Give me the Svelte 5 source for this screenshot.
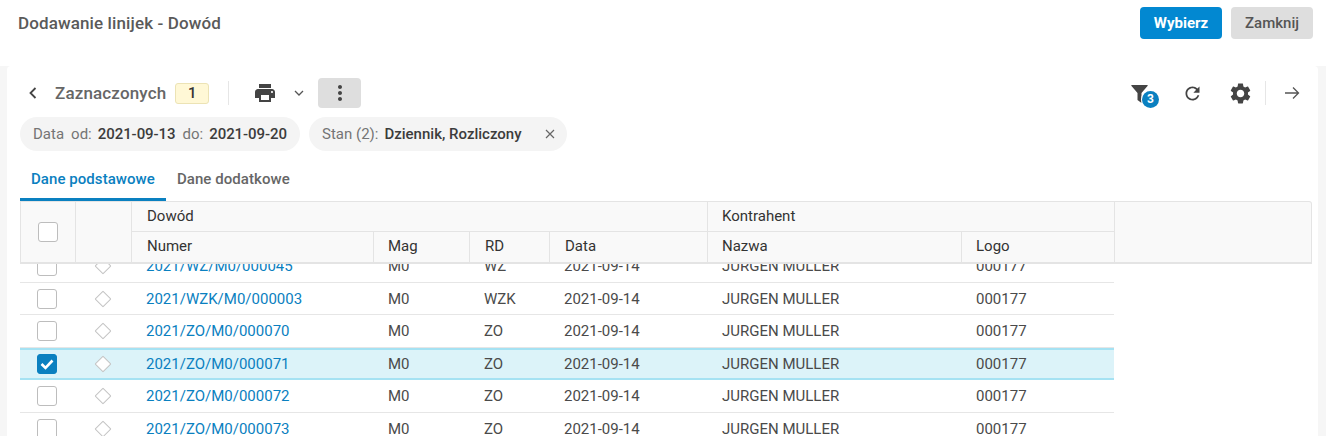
<script>
    const rows = [
        { numer: '2021/WZ/M0/000045', rd: 'WZ' },
        { numer: '2021/WZK/M0/000003', rd: 'WZK' },
        { numer: '2021/ZO/M0/000070', rd: 'ZO' },
        { numer: '2021/ZO/M0/000071', rd: 'ZO', selected: true },
        { numer: '2021/ZO/M0/000072', rd: 'ZO' },
        { numer: '2021/ZO/M0/000073', rd: 'ZO' }
    ]
</script>

<div class="page">
    <header class="top">
        <h1>Dodawanie linijek - Dowód</h1>
        <div class="actions">
            <button class="btn primary">Wybierz</button>
            <button class="btn">Zamknij</button>
        </div>
    </header>

    <main class="card">
        <div class="toolbar">
            <svg class="back" width="10" height="12" viewBox="0 0 10 12"><path d="M7.5 1 L2.5 6 L7.5 11" fill="none" stroke="#444" stroke-width="1.8"/></svg>
            <span class="label">Zaznaczonych</span>
            <span class="count">1</span>
            <span class="sep"></span>
            <svg class="print" width="24" height="24" viewBox="0 0 24 24"><path fill="#444" d="M19 8H5c-1.66 0-3 1.34-3 3v6h4v4h12v-4h4v-6c0-1.66-1.34-3-3-3zm-3 11H8v-5h8v5zm3-7c-.55 0-1-.45-1-1s.45-1 1-1 1 .45 1 1-.45 1-1 1zm-1-9H6v4h12V3z"/></svg>
            <svg class="chev" width="10" height="6" viewBox="0 0 10 6"><path d="M1 1 L5 5 L9 1" fill="none" stroke="#555" stroke-width="1.3"/></svg>
            <span class="more">
                <svg width="24" height="24" viewBox="0 0 24 24"><path fill="#444" d="M12 8c1.1 0 2-.9 2-2s-.9-2-2-2-2 .9-2 2 .9 2 2 2zm0 2c-1.1 0-2 .9-2 2s.9 2 2 2 2-.9 2-2-.9-2-2-2zm0 6c-1.1 0-2 .9-2 2s.9 2 2 2 2-.9 2-2-.9-2-2-2z"/></svg>
            </span>
            <div class="tools">
                <span class="filter">
                    <svg width="17" height="18" viewBox="0 0 17 18"><path fill="#444" d="M0.5 0 H16.5 Q17 0 16.5 1 L10.5 8 V18 L6.5 15 V8 L0.5 1 Q0 0 0.5 0 Z"/></svg>
                    <b class="badge">3</b>
                </span>
                <svg class="refresh" width="21" height="21" viewBox="0 0 24 24"><path fill="#444" d="M17.65 6.35C16.2 4.9 14.21 4 12 4c-4.42 0-7.99 3.58-7.99 8s3.57 8 7.99 8c3.73 0 6.84-2.55 7.73-6h-2.08c-.82 2.33-3.04 4-5.65 4-3.31 0-6-2.69-6-6s2.69-6 6-6c1.66 0 3.14.69 4.22 1.78L13 11h7V4l-2.35 2.35z"/></svg>
                <svg class="gear" width="25" height="25" viewBox="0 0 24 24"><path fill="#444" d="M19.14 12.94c.04-.3.06-.61.06-.94 0-.32-.02-.64-.07-.94l2.03-1.58c.18-.14.23-.41.12-.61l-1.92-3.32c-.12-.22-.37-.29-.59-.22l-2.39.96c-.5-.38-1.03-.7-1.62-.94l-.36-2.54c-.04-.24-.24-.41-.48-.41h-3.84c-.24 0-.43.17-.47.41l-.36 2.54c-.59.24-1.13.57-1.62.94l-2.39-.96c-.22-.08-.47 0-.59.22L2.74 8.87c-.12.21-.08.47.12.61l2.03 1.58c-.05.3-.09.63-.09.94s.02.64.07.94l-2.03 1.58c-.18.14-.23.41-.12.61l1.92 3.32c.12.22.37.29.59.22l2.39-.96c.5.38 1.03.7 1.62.94l.36 2.54c.05.24.24.41.48.41h3.84c.24 0 .44-.17.47-.41l.36-2.54c.59-.24 1.13-.56 1.62-.94l2.39.96c.22.08.47 0 .59-.22l1.92-3.32c.12-.22.07-.47-.12-.61l-2.01-1.58zM12 15.6c-1.98 0-3.6-1.62-3.6-3.6s1.62-3.6 3.6-3.6 3.6 1.62 3.6 3.6-1.62 3.6-3.6 3.6z"/></svg>
                <span class="sep tall"></span>
                <svg class="arrow" width="16" height="14" viewBox="0 0 16 14"><path d="M1 7 H14.5 M9 1.5 L14.5 7 L9 12.5" fill="none" stroke="#555" stroke-width="1.3"/></svg>
            </div>
        </div>

        <div class="chips">
            <div class="chip">
                <span>Data</span><span class="pre">od:</span><strong>2021-09-13</strong><span class="pre">do:</span><strong>2021-09-20</strong>
            </div>
            <div class="chip second">
                <span>Stan (2):</span><strong>Dziennik, Rozliczony</strong>
                <svg class="close" width="10" height="10" viewBox="0 0 10 10"><path d="M1 1 L9 9 M9 1 L1 9" stroke="#666" stroke-width="1.2"/></svg>
            </div>
        </div>

        <nav class="tabs">
            <span class="tab active">Dane podstawowe</span>
            <span class="tab">Dane dodatkowe</span>
        </nav>

        <div class="table">
            <div class="head">
                <div class="h-check"><span class="box"></span></div>
                <div class="h-mark"></div>
                <div class="h-group g-dowod">Dowód</div>
                <div class="h-group g-kontr">Kontrahent</div>
                <div class="h-rest"></div>
                <div class="h-cell c3">Numer</div>
                <div class="h-cell c4">Mag</div>
                <div class="h-cell c5">RD</div>
                <div class="h-cell c6">Data</div>
                <div class="h-cell c7">Nazwa</div>
                <div class="h-cell c8">Logo</div>
            </div>
            <div class="body">
                {#each rows as row}
                    <div class="row" class:selected={row.selected}>
                        <div class="cell center">
                            <span class="box" class:checked={row.selected}>
                                {#if row.selected}
                                    <svg width="20" height="20" viewBox="0 0 20 20"><path d="M4.5 10 L8.5 14 L15.5 6.5" fill="none" stroke="#fff" stroke-width="2.6"/></svg>
                                {/if}
                            </span>
                        </div>
                        <div class="cell center"><span class="diamond"></span></div>
                        <div class="cell link">{row.numer}</div>
                        <div class="cell">M0</div>
                        <div class="cell">{row.rd}</div>
                        <div class="cell">2021-09-14</div>
                        <div class="cell">JURGEN MULLER</div>
                        <div class="cell">000177</div>
                    </div>
                {/each}
            </div>
        </div>
    </main>
</div>

<style>
    :global(body) {
        margin: 0;
        background: #fff;
    }
    .page {
        width: 1326px;
        height: 436px;
        overflow: hidden;
        font-family: Roboto, "Liberation Sans", sans-serif;
        font-size: 15px;
        color: #444;
        background: #f6f6f6;
        display: flex;
        flex-direction: column;
    }
    .top {
        height: 66px;
        flex: none;
        background: #fff;
        display: flex;
        justify-content: space-between;
        box-sizing: border-box;
        padding: 7px 13px 0 18px;
    }
    h1 {
        margin: 7px 0 0;
        font-size: 17px;
        line-height: 19px;
        font-weight: 500;
        color: #5a5a5a;
        letter-spacing: .12px;
    }
    .actions {
        display: flex;
        gap: 9px;
        height: 32px;
    }
    .btn {
        width: 82px;
        height: 32px;
        border: 0;
        padding: 0;
        border-radius: 4px;
        background: #dedede;
        color: #555;
        font: 500 15px Roboto, sans-serif;
    }
    .primary {
        background: #0288d1;
        color: #fff;
        font-weight: 700;
    }
    .card {
        flex: 1;
        margin: 0 8px 0 7px;
        background: #fff;
        border-radius: 4px 4px 0 0;
        box-sizing: border-box;
        padding: 12px 6px 0 13px;
    }
    .toolbar {
        display: flex;
        align-items: center;
        height: 30px;
    }
    .back {
        margin-left: 8px;
    }
    .label {
        margin-left: 17px;
        font-size: 17px;
        font-weight: 500;
        color: #666;
        letter-spacing: .15px;
    }
    .count {
        margin-left: 9px;
        width: 34px;
        height: 21px;
        box-sizing: border-box;
        border: 1px solid #ece3b5;
        background: #fff8d6;
        border-radius: 3px;
        text-align: center;
        line-height: 19px;
        font-weight: 500;
        color: #333;
    }
    .sep {
        width: 1px;
        height: 24px;
        background: #e6e6e6;
        margin-left: 19px;
    }
    .print {
        margin-left: 24px;
    }
    .chev {
        margin-left: 17px;
    }
    .more {
        margin-left: 14px;
        width: 43px;
        height: 30px;
        background: #dedede;
        border-radius: 4px;
        display: flex;
        align-items: center;
        justify-content: center;
    }
    .tools {
        margin-left: auto;
        display: flex;
        align-items: center;
        height: 30px;
        padding-right: 12px;
    }
    .filter {
        position: relative;
        width: 17px;
        height: 18px;
        margin-right: 34px;
        margin-top: 1px;
    }
    .filter svg {
        display: block;
    }
    .badge {
        position: absolute;
        left: 11px;
        top: 6px;
        width: 17px;
        height: 17px;
        border-radius: 50%;
        background: #0a80c0;
        box-shadow: 0 0 0 1px #fff;
        color: #fff;
        font-size: 12px;
        line-height: 17px;
        text-align: center;
    }
    .gear {
        margin-left: 25px;
    }
    .sep.tall {
        margin-left: 12px;
    }
    .arrow {
        margin-left: 18px;
    }
    .chips {
        display: flex;
        gap: 9px;
        margin-top: 9px;
    }
    .chip {
        height: 34px;
        box-sizing: border-box;
        padding: 0 13px;
        border-radius: 17px;
        background: #f4f4f4;
        display: flex;
        align-items: center;
        color: #757575;
        white-space: nowrap;
    }
    .chip strong {
        font-weight: 500;
        color: #3c3c3c;
        margin-left: 6px;
    }
    .chip .pre {
        margin-left: 7px;
        color: #757575;
    }
    .chip .pre + strong {
        letter-spacing: -.06px;
    }
    .close {
        margin-left: 23px;
        margin-right: -1px;
    }
    .tabs {
        display: flex;
        height: 41px;
        margin-top: 9px;
    }
    .tab {
        padding: 0 11px;
        line-height: 38px;
        font-weight: 500;
        color: #666;
        box-sizing: border-box;
        height: 41px;
        letter-spacing: .06px;
    }
    .active {
        color: #0a80c0;
        border-bottom: 3px solid #0a80c0;
    }
    .table {
        width: 1292px;
    }
    .head {
        position: relative;
        z-index: 1;
        height: 63px;
        box-sizing: border-box;
        background: #f9f9f9;
        border: 1px solid #e4e4e4;
        border-bottom-width: 2px;
        border-top-right-radius: 3px;
        display: grid;
        grid-template-columns: 55px 56px 242px 96px 80px 158px 254px 153px 1fr;
        grid-template-rows: 30px 30px;
        color: #333;
    }
    .h-check, .h-mark {
        grid-row: 1 / 3;
        border-right: 1px solid #e4e4e4;
    }
    .h-check {
        display: flex;
        align-items: center;
        justify-content: center;
    }
    .h-group, .h-cell {
        padding-left: 15px;
        line-height: 29px;
        border-right: 1px solid #e4e4e4;
    }
    .h-group {
        border-bottom: 1px solid #e4e4e4;
    }
    .g-dowod {
        grid-column: 3 / 7;
    }
    .g-kontr {
        grid-column: 7 / 9;
        padding-left: 14px;
    }
    .h-rest {
        grid-column: 9;
        grid-row: 1 / 3;
    }
    .c3 { grid-column: 3; grid-row: 2; }
    .c4 { grid-column: 4; grid-row: 2; padding-left: 14px; }
    .c5 { grid-column: 5; grid-row: 2; }
    .c6 { grid-column: 6; grid-row: 2; }
    .c7 { grid-column: 7; grid-row: 2; padding-left: 14px; }
    .c8 { grid-column: 8; grid-row: 2; padding-left: 14px; }
    .body {
        margin-top: -13.75px;
        width: 1094px;
    }
    .row {
        display: grid;
        grid-template-columns: 54px 57px 242px 96px 80px 158px 254px 153px;
        height: 32.5px;
        box-sizing: border-box;
        border-bottom: 1px solid #e6e6e6;
        align-items: center;
        color: #4a4a4a;
    }
    .selected {
        background: #dcf3f9;
        border-top: 2px solid #a5e2f3;
        border-bottom: 2px solid #a5e2f3;
    }
    .cell {
        padding-left: 15px;
        white-space: nowrap;
    }
    .center {
        padding-left: 0;
        display: flex;
        justify-content: center;
        align-items: center;
    }
    .link {
        color: #0a80c0;
    }
    .box {
        display: block;
        width: 20px;
        height: 20px;
        box-sizing: border-box;
        border: 1px solid #bdbdbd;
        border-radius: 3px;
        background: #fff;
    }
    .box.checked {
        background: #0a80c0;
        border-color: #0a80c0;
    }
    .box svg {
        display: block;
        margin: -1px;
    }
    .diamond {
        display: block;
        width: 12px;
        height: 12px;
        box-sizing: border-box;
        border: 1px solid #c4c4c4;
        background: #fff;
        border-radius: 1px;
        transform: rotate(45deg);
    }
</style>
